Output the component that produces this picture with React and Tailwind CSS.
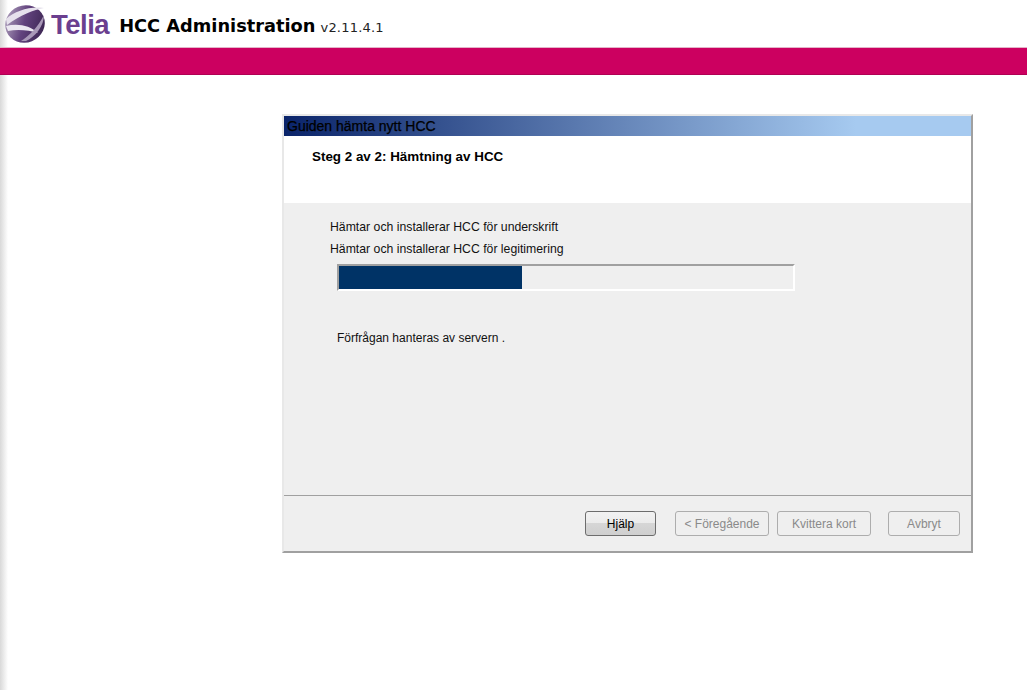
const sans = { fontFamily: '"Liberation Sans", Arial, sans-serif' }

function TeliaLogo() {
  return (
    <svg width="48" height="44" viewBox="0 0 48 44" className="shrink-0">
      <defs>
        <linearGradient id="sphere" x1="0" y1="0.2" x2="1" y2="0.9">
          <stop offset="0" stopColor="#b3a6c0" />
          <stop offset="0.45" stopColor="#62437e" />
          <stop offset="1" stopColor="#35204a" />
        </linearGradient>
      </defs>
      <ellipse cx="25" cy="22" rx="20" ry="18.5" fill="url(#sphere)" transform="rotate(-22 25 22)" />
      <path d="M6 17 C15 9 30 4 44 6 C34 8 20 13 7 23 Z" fill="#e6e1ec" />
      <path d="M6 24 C17 21 30 23 38 31 C29 28 17 27 8 29 Z" fill="#ece8f1" />
      <path d="M21 39 C29 34 38 25 44 13 C44 24 35 35 26 39 Z" fill="#a998b8" />
    </svg>
  )
}

function WizardButton({ label, disabled, className }) {
  return (
    <button
      disabled={disabled}
      className={[
        'h-[25px] rounded-[3px] border text-[12px] leading-none',
        disabled
          ? 'border-[#adadad] bg-[#efefef] text-[#8a8a8a]'
          : 'border-[#6d6d6d] bg-[linear-gradient(to_bottom,#f2f2f2_0%,#ebebeb_50%,#d6d6d6_50%,#cfcfcf_100%)] text-black',
        className,
      ].join(' ')}
    >
      {label}
    </button>
  )
}

export default function App() {
  return (
    <div
      className="min-h-[690px] bg-[linear-gradient(to_right,#d9d9d9_0px,#ffffff_8px)] overflow-hidden"
      style={sans}
    >
      {/* Header */}
      <div className="h-[47px] flex items-center">
        <TeliaLogo />
        <span className="ml-[3px] mt-[3px] text-[27.5px] font-bold tracking-[-0.5px] text-[#6b3f8f] leading-none">
          Telia
        </span>
        <span className="ml-[10px] mt-[4px] font-['DejaVu_Sans'] text-[17.8px] font-bold text-black leading-none">
          HCC Administration
        </span>
        <span className="ml-[5px] mt-[8px] font-['DejaVu_Sans'] text-[13px] text-[#222] leading-none tracking-[0.2px]">
          v2.11.4.1
        </span>
      </div>
      <div className="h-[28px] bg-[#cc0060] border-t border-[#e3b4c8] border-b-[1px] border-b-[#b00053]" />

      {/* Wizard */}
      <div className="ml-[282px] mt-[39px] w-[691px] h-[439px] flex flex-col bg-[#efefef] border-2 border-t-[#e8e8e8] border-l-[#e8e8e8] border-r-[#a0a0a0] border-b-[#a0a0a0]">
        <div className="h-[20px] shrink-0 flex items-center pl-[3px] text-[14px] text-black bg-[linear-gradient(to_right,#0a246a_0px,#a6caf0_572px)] [-webkit-text-stroke:0.25px_black]">
          Guiden hämta nytt HCC
        </div>
        <div className="h-[67px] shrink-0 bg-white pl-[28px] pt-[13px] text-[13.4px] font-bold text-black leading-[15px]">
          Steg 2 av 2: Hämtning av HCC
        </div>

        <div className="flex-1 flex flex-col pl-[46px] pt-[17px] text-[12.25px] text-[#111] leading-[15px]">
          <div>Hämtar och installerar HCC för underskrift</div>
          <div className="mt-[7px]">Hämtar och installerar HCC för legitimering</div>
          <div className="ml-[7px] mt-[7px] w-[458px] h-[27px] border-2 border-t-[#a0a0a0] border-l-[#a0a0a0] border-r-white border-b-white">
            <div className="h-full w-[183px] bg-[#003366]" />
          </div>
          <div className="ml-[7px] mt-[40px] text-[12px]">Förfrågan hanteras av servern .</div>
        </div>

        <div className="h-[56px] shrink-0 border-t border-[#a0a0a0] flex pt-[15px] pl-[301px]">
          <WizardButton label="Hjälp" className="w-[71px]" />
          <WizardButton label="< Föregående" disabled className="ml-[19px] w-[94px]" />
          <WizardButton label="Kvittera kort" disabled className="ml-[8px] w-[94px]" />
          <WizardButton label="Avbryt" disabled className="ml-[17px] w-[72px]" />
        </div>
      </div>
    </div>
  )
}
